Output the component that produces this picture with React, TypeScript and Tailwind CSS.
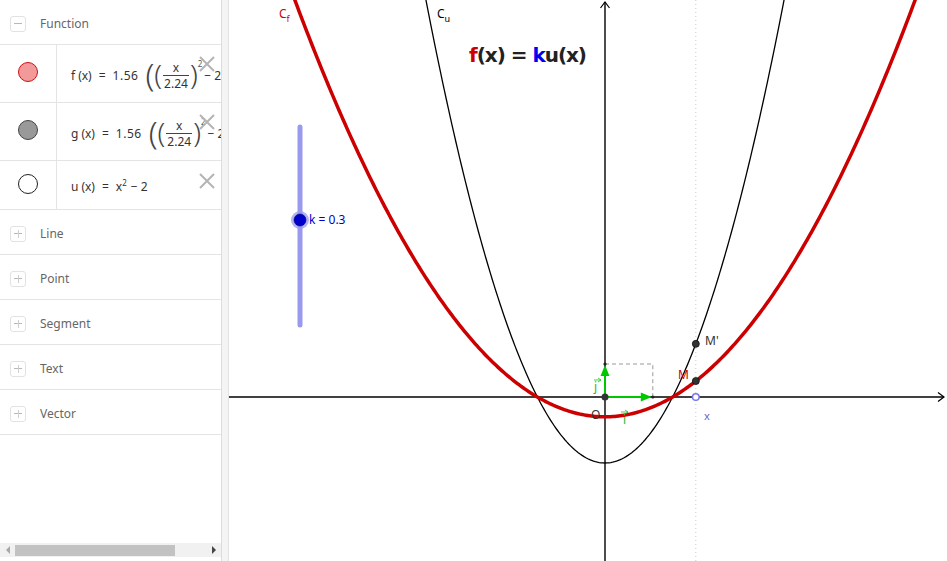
import React from "react";

const OX = 376;
const OY = 397;
const SX = 47.8;
const SY = 33;
const K = 0.3;

const px = (x: number) => OX + x * SX;
const py = (y: number) => OY - y * SY;

function curve(fn: (x: number) => number) {
  const pts: string[] = [];
  for (let x = -8.2; x <= 7.2; x += 0.04) {
    const y = fn(x);
    if (y > 14) continue;
    pts.push(`${px(x).toFixed(2)},${py(y).toFixed(2)}`);
  }
  return "M" + pts.join(" L");
}

const u = (x: number) => x * x - 2;
const f = (x: number) => K * u(x);

function CloseIcon({ top }: { top: number }) {
  return (
    <svg
      className="absolute right-[5px]"
      style={{ top }}
      width="18"
      height="18"
      viewBox="0 0 18 18"
    >
      <path d="M2 2 L16 16 M16 2 L2 16" stroke="#b4b4b4" strokeWidth="2" />
    </svg>
  );
}

function ToggleBox({ open }: { open: boolean }) {
  return (
    <div className="w-[16px] h-[16px] rounded-[3px] border border-[#e2e2e2] bg-white flex items-center justify-center">
      <div className="relative w-[8px] h-[8px] flex items-center justify-center">
        <div className="absolute w-[8px] h-[1px] bg-[#b8b8b8]" />
        {!open && <div className="absolute w-[1px] h-[8px] bg-[#cfcfcf]" />}
      </div>
    </div>
  );
}

function Formula({ name }: { name: string }) {
  return (
    <div className="flex items-center whitespace-nowrap text-[12px] text-[#333]">
      <span>{name}</span>
      <span className="ml-[3px]">(x)</span>
      <span className="mx-[7px]">=</span>
      <span className="tracking-[0.5px]">1.56</span>
      <span className="ml-[7px] text-[32px] font-light leading-none text-[#444] -mt-[4px]">(</span>
      <span className="text-[28px] font-light leading-none text-[#444] -mt-[4px]">(</span>
      <span className="flex flex-col items-center mx-[1px] text-[12px] leading-[15px]">
        <span>x</span>
        <span className="border-t border-[#444] px-[1px]">2.24</span>
      </span>
      <span className="text-[28px] font-light leading-none text-[#444] -mt-[4px]">)</span>
      <span className="text-[8px] -mt-[24px] text-[#555]">2</span>
      <span className="ml-[2px]">− 2</span>
    </div>
  );
}

function FunctionRow({
  h,
  dot,
  closeTop,
  children,
}: {
  h: string;
  dot: string;
  closeTop: number;
  children: React.ReactNode;
}) {
  return (
    <div className={`relative flex ${h} border-b border-[#e4e4e4]`}>
      <div className="w-[57px] shrink-0 border-r border-[#e4e4e4] flex items-center justify-center pb-[3px]">
        <div className={`w-[20px] h-[20px] rounded-full border ${dot}`} />
      </div>
      <div className="flex-1 pl-[14px] pt-[4px] flex items-center overflow-hidden">{children}</div>
      <CloseIcon top={closeTop} />
    </div>
  );
}

function Category({ label }: { label: string }) {
  return (
    <div className="h-[45px] flex items-center border-b border-[#e4e4e4] pl-[10px] pt-[3px]">
      <ToggleBox open={false} />
      <span className="ml-[14px] text-[12px] text-[#666]">{label}</span>
    </div>
  );
}

function Graph() {
  const xm = 1.9;
  const mx = px(xm);
  const mpy = py(u(xm));
  const my = py(f(xm));
  return (
    <svg width="718" height="561" viewBox="0 0 718 561" className="block">
      {/* dotted line through x */}
      <line x1={mx} y1="0" x2={mx} y2="561" stroke="#c8c8c8" strokeWidth="1" strokeDasharray="1 3" />
      {/* axes */}
      <line x1="0" y1={OY} x2="715" y2={OY} stroke="#000" strokeWidth="1.4" />
      <path d={`M709 ${OY - 4.5} L715 ${OY} L709 ${OY + 4.5}`} stroke="#000" strokeWidth="1.2" fill="none" />
      <line x1={OX} y1="2" x2={OX} y2="561" stroke="#000" strokeWidth="1.4" />
      <path d={`M${OX - 4.5} 8 L${OX} 2 L${OX + 4.5} 8`} stroke="#000" strokeWidth="1.2" fill="none" />
      {/* dashed unit box */}
      <path
        d={`M${OX} ${OY - SY} L${OX + SX} ${OY - SY} L${OX + SX} ${OY}`}
        stroke="#9a9a9a"
        strokeWidth="1"
        strokeDasharray="4 3"
        fill="none"
      />
      {/* curves */}
      <path d={curve(u)} stroke="#000" strokeWidth="1.3" fill="none" />
      <path d={curve(f)} stroke="#cc0000" strokeWidth="3.5" fill="none" strokeLinejoin="round" />
      {/* vectors */}
      <line x1={OX} y1={OY} x2={OX + SX - 9} y2={OY} stroke="#00c800" strokeWidth="2" />
      <path d={`M${OX + SX - 1} ${OY} L${OX + SX - 12} ${OY - 4.5} L${OX + SX - 12} ${OY + 4.5} Z`} fill="#00c800" />
      <line x1={OX} y1={OY} x2={OX} y2={OY - SY + 9} stroke="#00c800" strokeWidth="2" />
      <path d={`M${OX} ${OY - SY + 1} L${OX - 4.5} ${OY - SY + 12} L${OX + 4.5} ${OY - SY + 12} Z`} fill="#00c800" />
      <circle cx={OX + SX} cy={OY} r="1.6" fill="#222" />
      <circle cx={OX} cy={OY - SY} r="1.6" fill="#222" />
      {/* points */}
      <circle cx={OX} cy={OY} r="3.5" fill="#333" />
      <circle cx={mx} cy={OY} r="3.3" fill="#fff" stroke="#7777ee" strokeWidth="1.5" />
      <circle cx={mx} cy={mpy} r="3.5" fill="#333" stroke="#111" strokeWidth="0.8" />
      <circle cx={mx} cy={my} r="3.5" fill="#333" stroke="#111" strokeWidth="0.8" />
      {/* slider */}
      <line x1="71" y1="127" x2="71" y2="325" stroke="#9999ee" strokeWidth="5" strokeLinecap="round" />
      <circle cx="71" cy="220" r="9" fill="#9999ee" opacity="0.75" />
      <circle cx="71" cy="220" r="6" fill="#0000cc" stroke="#000066" strokeWidth="0.6" />
      <g fontFamily="'Noto Sans', sans-serif">
        <text x="80" y="224" fontSize="12" fill="#0000cc">k = 0.3</text>
        {/* labels */}
        <text x="50" y="18" fontSize="12" fill="#cc0000">
          C<tspan fontSize="9" dy="4">f</tspan>
        </text>
        <text x="208" y="18" fontSize="12" fill="#000">
          C<tspan fontSize="9" dy="4">u</tspan>
        </text>
        <text x="476" y="345" fontSize="12" fill="#333">M'</text>
        <text x="449" y="379" fontSize="12" fill="#cc0000">M</text>
        <text x="362" y="419" fontSize="12" fill="#333">O</text>
        <text x="475" y="420" fontSize="11" fill="#6666cc">x</text>
        <text x="365" y="391" fontSize="12" fill="#22bb22">j</text>
        <path d="M365 380 L372 380 M369 378 L372 380 L369 382" stroke="#22bb22" strokeWidth="0.8" fill="none" />
        <text x="394" y="424" fontSize="12" fill="#22bb22">i</text>
        <path d="M392 412 L399 412 M396 410 L399 412 L396 414" stroke="#22bb22" strokeWidth="0.8" fill="none" />
      </g>
      {/* title */}
      <text
        x="240"
        y="62"
        fontSize="20"
        fontWeight="bold"
        fontFamily="'DejaVu Sans', sans-serif"
        fill="#222"
        textLength="118"
        lengthAdjust="spacing"
      >
        <tspan fill="#cc0000">f</tspan>
        <tspan>(x) = </tspan>
        <tspan fill="#0000ee">k</tspan>
        <tspan>u(x)</tspan>
      </text>
    </svg>
  );
}

export default function App() {
  return (
    <div className="flex w-[947px] h-[561px] bg-white overflow-hidden font-['Noto_Sans',sans-serif]">
      <aside className="relative w-[222px] shrink-0 border-r border-[#dcdcdc] flex flex-col">
        <div className="h-[45px] flex items-center border-b border-[#e4e4e4] pl-[10px] pt-[3px]">
          <ToggleBox open={true} />
          <span className="ml-[14px] text-[12px] text-[#666]">Function</span>
        </div>
        <FunctionRow h="h-[58px]" dot="bg-[#f29a9a] border-[#cc1111]" closeTop={10}>
          <Formula name="f" />
        </FunctionRow>
        <FunctionRow h="h-[58px]" dot="bg-[#999] border-[#444]" closeTop={10}>
          <Formula name="g" />
        </FunctionRow>
        <FunctionRow h="h-[49px]" dot="bg-white border-[#222]" closeTop={11}>
          <div className="flex items-center whitespace-nowrap text-[12px] text-[#333]">
            <span>u</span>
            <span className="ml-[3px]">(x)</span>
            <span className="mx-[7px]">=</span>
            <span>x</span>
            <span className="text-[8px] -mt-[8px]">2</span>
            <span className="ml-[4px]">− 2</span>
          </div>
        </FunctionRow>
        <Category label="Line" />
        <Category label="Point" />
        <Category label="Segment" />
        <Category label="Text" />
        <Category label="Vector" />
        <div className="flex-1" />
        <div className="h-[14px] mb-[4px] bg-[#f1f1f1] flex items-center">
          <div className="w-[15px] flex justify-center">
            <div className="w-0 h-0 border-y-[4px] border-y-transparent border-r-[4px] border-r-[#a8a8a8]" />
          </div>
          <div className="w-[160px] h-[11px] bg-[#c2c2c2]" />
          <div className="flex-1" />
          <div className="w-[15px] flex justify-center">
            <div className="w-0 h-0 border-y-[4px] border-y-transparent border-l-[4px] border-l-[#444]" />
          </div>
        </div>
      </aside>
      <div className="w-[7px] shrink-0 bg-[#f4f4f4] border-r border-[#e2e2e2]" />
      <div className="flex-1">
        <Graph />
      </div>
    </div>
  );
}
